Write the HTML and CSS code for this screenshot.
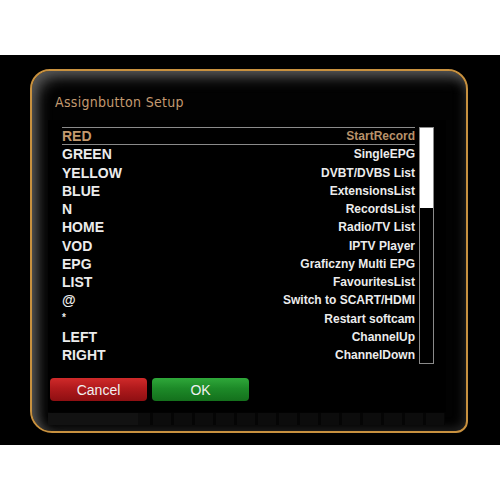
FILE: index.html
```html
<!DOCTYPE html>
<html>
<head>
<meta charset="utf-8">
<link rel="stylesheet" href="styles.css">
</head>
<body>
<div class="screen">
  <div class="dialog">
    <div class="title">Assignbutton Setup</div>
    <div class="panel">
      <div class="listwrap">
        <div class="list">
          <div class="row selected"><span class="key">RED</span><span class="act">StartRecord</span></div>
          <div class="row"><span class="key">GREEN</span><span class="act">SingleEPG</span></div>
          <div class="row"><span class="key">YELLOW</span><span class="act">DVBT/DVBS List</span></div>
          <div class="row"><span class="key">BLUE</span><span class="act">ExtensionsList</span></div>
          <div class="row"><span class="key">N</span><span class="act">RecordsList</span></div>
          <div class="row"><span class="key">HOME</span><span class="act">Radio/TV List</span></div>
          <div class="row"><span class="key">VOD</span><span class="act">IPTV Player</span></div>
          <div class="row"><span class="key">EPG</span><span class="act">Graficzny Multi EPG</span></div>
          <div class="row"><span class="key">LIST</span><span class="act">FavouritesList</span></div>
          <div class="row"><span class="key">@</span><span class="act">Switch to SCART/HDMI</span></div>
          <div class="row"><span class="key small">*</span><span class="act">Restart softcam</span></div>
          <div class="row"><span class="key">LEFT</span><span class="act">ChannelUp</span></div>
          <div class="row"><span class="key">RIGHT</span><span class="act">ChannelDown</span></div>
        </div>
        <div class="scrollbar"><div class="thumb"></div></div>
      </div>
      <div class="buttons">
        <div class="btn cancel">Cancel</div>
        <div class="btn ok">OK</div>
      </div>
      <div class="strip"><div class="strip-left"></div></div>
    </div>
  </div>
</div>
</body>
</html>
```
FILE: styles.css
```css
html, body {
  margin: 0;
  padding: 0;
  background: #ffffff;
}
body {
  width: 500px;
  height: 500px;
  overflow: hidden;
}
.screen {
  margin-top: 55px;
  height: 390px;
  background: #000;
  padding-top: 14px;
  box-sizing: border-box;
}
.dialog {
  margin-left: 30px;
  width: 438px;
  height: 364px;
  box-sizing: border-box;
  border: 2px solid #c8913f;
  border-radius: 20px 20px 12px 22px;
  background: #020202;
  box-shadow: inset 9px 10px 14px -3px rgba(160,160,160,0.45), inset 0 0 12px 1px rgba(120,120,120,0.35);
}
.title {
  padding: 21px 0 0 23px;
  height: 20px;
  line-height: 20px;
  font-family: "DejaVu Sans Condensed", "DejaVu Sans", sans-serif;
  font-stretch: condensed;
  font-size: 14px;
  color: #c49a70;
  letter-spacing: 0.3px;
}
.panel {
  margin: 8px 0 0 16px;
  width: 398px;
  height: 292px;
  background: #000;
  padding: 7px 0 0 2px;
  box-sizing: border-box;
}
.listwrap {
  display: flex;
  margin-left: 12px;
}
.list {
  width: 353px;
  font-family: "Liberation Sans", Arial, sans-serif;
  font-weight: bold;
}
.row {
  height: 18.25px;
  display: flex;
  align-items: center;
  justify-content: space-between;
  box-sizing: border-box;
}
.row.selected {
  border-top: 1px solid #8a8a8a;
  border-bottom: 1px solid #8a8a8a;
}
.key {
  font-size: 14px;
  color: #ececec;
}
.key.small {
  font-size: 10px;
  align-self: flex-start;
  margin-top: 2px;
}
.act {
  font-size: 12px;
  color: #ececec;
}
.selected .key {
  color: #c49a6e;
}
.selected .act {
  color: #b8926a;
}
.scrollbar {
  margin-left: 4px;
  width: 15px;
  height: 237px;
  border: 1px solid #8a8a8a;
  box-sizing: border-box;
}
.thumb {
  height: 80px;
  background: #ffffff;
}
.buttons {
  display: flex;
  gap: 5px;
  margin-top: 14px;
}
.btn {
  width: 97px;
  height: 23px;
  border-radius: 4px;
  font-family: "Liberation Sans", Arial, sans-serif;
  font-size: 14px;
  color: #f0f0f0;
  display: flex;
  align-items: center;
  justify-content: center;
}
.cancel {
  background: linear-gradient(#d02a2a 0%, #b01a1c 45%, #8e0f12 100%);
}
.ok {
  background: linear-gradient(#2fa83a 0%, #1d8a28 45%, #14701c 100%);
}
.strip {
  margin: 12px 0 0 -2px;
  width: 397px;
  height: 12px;
  background: repeating-linear-gradient(90deg, #0c0c0c 0 18px, #050505 18px 21px);
  display: flex;
}
.strip-left {
  width: 90px;
  background: #121212;
}
```
